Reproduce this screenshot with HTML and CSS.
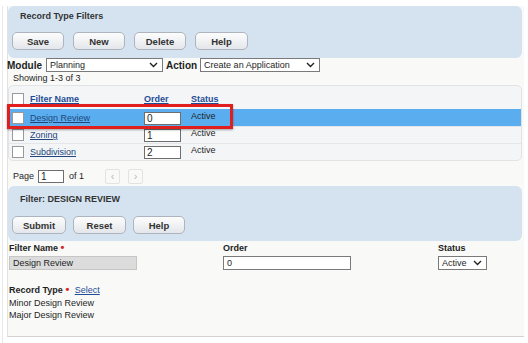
FILE: index.html
```html
<!DOCTYPE html>
<html>
    <head>
        <title>Record Type Filters</title>
        <link rel="stylesheet" href="styles.css">
    </head>
    <body>
        <div class="screen">
            <div class="frame">
                <div class="panel">
                    <div class="panel-title">Record Type Filters</div>
                    <div class="toolbar">
                        <button class="btn w52">Save</button>
                        <button class="btn w52">New</button>
                        <button class="btn w52">Delete</button>
                        <button class="btn w53">Help</button>
                    </div>
                </div>

                <div class="filter-row">
                    <b>Module</b>
                    <div class="select sel-module">
                        <span>Planning</span>
                        <svg width="9" height="6" viewBox="0 0 9 6"><path d="M1 1 L4.5 4.5 L8 1" fill="none" stroke="#222" stroke-width="1.4"/></svg>
                    </div>
                    <b>Action</b>
                    <div class="select sel-action">
                        <span>Create an Application</span>
                        <svg width="9" height="6" viewBox="0 0 9 6"><path d="M1 1 L4.5 4.5 L8 1" fill="none" stroke="#222" stroke-width="1.4"/></svg>
                    </div>
                </div>
                <div class="count">Showing 1-3 of 3</div>

                <div class="grid-box">
                    <div class="row head">
                        <span class="check"></span>
                        <a href="#">Filter Name</a>
                        <a href="#">Order</a>
                        <a href="#">Status</a>
                    </div>
                    <div class="row selected">
                        <span class="check"></span>
                        <a href="#" class="name">Design Review</a>
                        <span class="order-input">0</span>
                        <span class="status">Active</span>
                    </div>
                    <div class="row">
                        <span class="check"></span>
                        <a href="#" class="name">Zoning</a>
                        <span class="order-input">1</span>
                        <span class="status">Active</span>
                    </div>
                    <div class="row">
                        <span class="check"></span>
                        <a href="#" class="name">Subdivision</a>
                        <span class="order-input">2</span>
                        <span class="status">Active</span>
                    </div>
                    <div class="callout"></div>
                </div>

                <div class="pager">
                    <span>Page</span>
                    <span class="page-input">1</span>
                    <span class="of">of 1</span>
                    <span class="nav nav-first">&lsaquo;</span>
                    <span class="nav">&rsaquo;</span>
                </div>

                <div class="panel panel-detail">
                    <div class="panel-title">Filter: DESIGN REVIEW</div>
                    <div class="toolbar">
                        <button class="btn w54">Submit</button>
                        <button class="btn w53">Reset</button>
                        <button class="btn w52">Help</button>
                    </div>
                </div>

                <div class="form">
                    <div class="field">
                        <label>Filter Name <span class="req">&bull;</span></label>
                        <div class="text-input readonly">Design Review</div>
                    </div>
                    <div class="field">
                        <label>Order</label>
                        <div class="text-input">0</div>
                    </div>
                    <div class="field">
                        <label>Status</label>
                        <div class="select sel-status">
                            <span>Active</span>
                            <svg width="9" height="6" viewBox="0 0 9 6"><path d="M1 1 L4.5 4.5 L8 1" fill="none" stroke="#222" stroke-width="1.4"/></svg>
                        </div>
                    </div>
                </div>

                <div class="record-type">
                    <div><b>Record Type</b> <span class="req">&bull;</span> <a href="#">Select</a></div>
                    <div>Minor Design Review</div>
                    <div>Major Design Review</div>
                </div>
            </div>
        </div>
    </body>
</html>
```

FILE: styles.css
```css
:root {
    --panel-bg: #d5e3f1;
    --link: #1f4d96;
    --row-line: #e4e6e9;
}


body {
    margin: 0;
    font-family: "Liberation Sans", Arial, sans-serif;
    font-size: 9px;
    color: #1e1e1e;
    background-color: #fff;
}
a {
    color: var(--link);
    text-decoration: underline;
}
b, label {
    font-weight: bold;
}


.screen {
    margin-left: 2px;
    border-left: 1px solid #e8e8e8;
    height: 343px;
}
.frame {
    margin-left: 4px;
    margin-top: 6px;
    width: 516px;
    height: 330px;
    background-color: #f9f9f7;
    border-left: 1px solid #e2e2e2;
    border-bottom: 1px solid #d2d2d2;
}


.panel {
    width: 514px;
    height: 52px;
    box-sizing: border-box;
    padding: 3px 0 0 4px;
    border-radius: 6px;
    background-color: var(--panel-bg);
}
.panel-title {
    padding-left: 8px;
    line-height: 14px;
    font-weight: bold;
    color: #333;
}
.toolbar {
    display: flex;
    gap: 9px;
    margin-top: 9px;
}
.btn {
    height: 18px;
    padding: 0;
    border: 1px solid #aeb4bd;
    border-radius: 5px;
    background: linear-gradient(#fdfdfd, #e3e6ea);
    font-family: inherit;
    font-size: 9.5px;
    font-weight: bold;
    color: #333;
}
.w52 { width: 52px; }
.w53 { width: 53px; }
.w54 { width: 54px; }

.panel-detail {
    height: 55px;
    margin-top: 1px;
    padding-top: 6px;
}
.panel-detail .toolbar {
    gap: 7px;
    margin-top: 10px;
}


.filter-row {
    display: flex;
    align-items: center;
    height: 14px;
    margin-left: -1px;
}
.filter-row b {
    font-size: 10px;
}
.select {
    display: flex;
    align-items: center;
    justify-content: space-between;
    height: 14px;
    box-sizing: border-box;
    padding: 0 4px 0 3px;
    border: 1px solid #7a7a7a;
    background-color: #fff;
    font-weight: normal;
    white-space: nowrap;
}
.sel-module {
    width: 117px;
    margin: 0 3px 0 4px;
}
.sel-action {
    width: 120px;
    margin-left: 3px;
}
.count {
    padding-left: 5px;
    line-height: 12px;
}


.grid-box {
    position: relative;
    width: 514px;
    height: 76px;
    box-sizing: border-box;
    margin-top: 1px;
    border: 1px solid #e2e3e5;
    border-radius: 5px;
    background-color: #f4f5f7;
}
.row {
    display: grid;
    grid-template-columns: 18px 114px 47px 1fr;
    align-items: center;
    height: 17px;
    border-top: 1px solid var(--row-line);
    box-sizing: border-box;
    padding-left: 3px;
}
.row.head {
    height: 23px;
    border-top: none;
    padding-top: 2px;
}
.row.head a {
    font-weight: bold;
}
.row.selected {
    background-color: #5aaef0;
    border-top-color: #5aaef0;
}
.check {
    width: 10px;
    height: 10px;
    border: 1px solid #999;
    background-color: #fff;
}
.row .name {
    color: #23457a;
}
.order-input {
    width: 37px;
    height: 13px;
    box-sizing: border-box;
    padding-left: 2px;
    border: 1px solid #6e6e6e;
    background-color: #fff;
    line-height: 11px;
    font-size: 10px;
}
.status {
    align-self: start;
    padding-top: 1px;
}
.callout {
    position: absolute;
    left: -2px;
    top: 18px;
    width: 226px;
    height: 25px;
    box-sizing: border-box;
    border: 3px solid #e01e1e;
    box-shadow: 0 1px 2px rgba(0, 0, 0, 0.35);
}


.pager {
    display: flex;
    align-items: center;
    height: 18px;
    margin-top: 6px;
    padding-left: 5px;
}
.page-input {
    width: 26px;
    height: 13px;
    box-sizing: border-box;
    margin-left: 4px;
    padding-left: 2px;
    border: 1px solid #6e6e6e;
    background-color: #fff;
    line-height: 11px;
    font-size: 10px;
}
.of {
    margin-left: 5px;
}
.nav {
    width: 15px;
    height: 15px;
    box-sizing: border-box;
    margin-left: 8px;
    border: 1px solid #e3e3e3;
    border-radius: 2px;
    color: #bbb;
    text-align: center;
    line-height: 12px;
    font-size: 11px;
}
.nav-first {
    margin-left: 21px;
}


.form {
    display: grid;
    grid-template-columns: 214px 215px auto;
    padding-left: 1px;
    margin-top: 1px;
}
.field label {
    display: block;
    line-height: 12px;
    color: #222;
}
.req {
    color: #d8262b;
    font-size: 11px;
    line-height: 10px;
    font-weight: bold;
}
.text-input {
    width: 128px;
    height: 14px;
    box-sizing: border-box;
    margin-top: 2px;
    padding-left: 3px;
    border: 1px solid #7a7a7a;
    background-color: #fff;
    line-height: 12px;
}
.text-input.readonly {
    border-color: #c6c6c6;
    background-color: #dcdcdc;
}
.sel-status {
    width: 49px;
    margin-top: 2px;
}


.record-type {
    margin-top: 14px;
    padding-left: 1px;
    line-height: 12.5px;
}
.record-type a {
    margin-left: 3px;
}
```
